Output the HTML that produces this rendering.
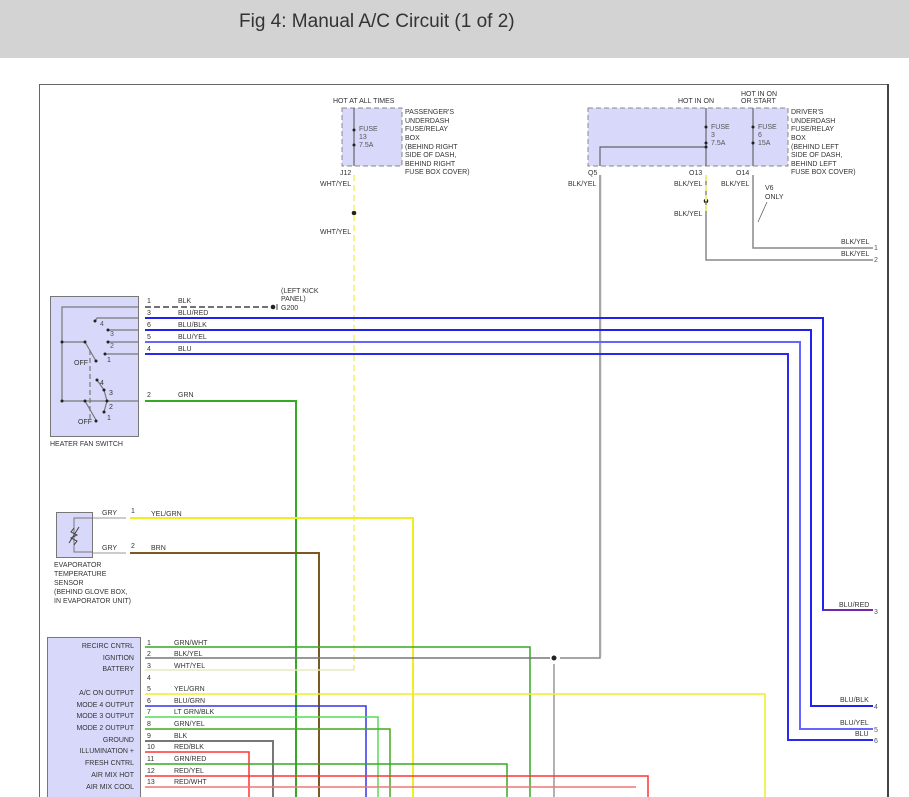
<!DOCTYPE html>
<html><head><meta charset="utf-8"><style>
html,body{margin:0;padding:0;background:#fff;width:909px;height:797px;overflow:hidden}
.hdr{position:absolute;left:0;top:0;width:909px;height:58px;background:#d3d3d3}
.hdr span{position:absolute;left:239px;top:11px;font:19px "Liberation Sans",sans-serif;color:#333}
svg{position:absolute;left:0;top:0}
text{font-family:"Liberation Sans",sans-serif;font-size:7px;fill:#333}
.n{fill:#555}
</style></head><body>
<div class="hdr"><span>Fig 4: Manual A/C Circuit (1 of 2)</span></div>
<svg width="909" height="797" viewBox="0 0 909 797">
<rect x="39.5" y="84.5" width="849" height="720" fill="none" stroke="#666" stroke-width="1"/>
<line x1="888" y1="84" x2="888" y2="797" stroke="#444" stroke-width="2"/>
<!-- fuse boxes -->
<rect x="342" y="108" width="60" height="58" fill="#d8d8fa" stroke="#888" stroke-dasharray="5,3"/>
<rect x="588" y="108" width="200" height="58" fill="#d8d8fa" stroke="#888" stroke-dasharray="5,3"/>
<g stroke="#666" fill="none" stroke-width="1.2">
<line x1="354" y1="108" x2="354" y2="166"/><line x1="706" y1="108" x2="706" y2="166"/><line x1="753" y1="108" x2="753" y2="166"/>
<polyline points="706,147 600,147 600,166"/>
</g>
<g fill="#222"><circle cx="354" cy="130" r="1.5"/><circle cx="354" cy="145" r="1.5"/><circle cx="706" cy="127" r="1.5"/><circle cx="706" cy="143" r="1.5"/><circle cx="706" cy="147" r="1.5"/><circle cx="753" cy="127" r="1.5"/><circle cx="753" cy="143" r="1.5"/>
<circle cx="354" cy="213" r="2.3"/><circle cx="706" cy="201" r="2.3"/><circle cx="554" cy="658" r="2.5"/><circle cx="273" cy="307" r="2.3"/></g>
<text x="333" y="103">HOT AT ALL TIMES</text>
<text x="359" y="131" class="n">FUSE</text><text x="359" y="139" class="n">13</text><text x="359" y="147" class="n">7.5A</text>
<text x="405" y="114">PASSENGER'S</text><text x="405" y="123">UNDERDASH</text><text x="405" y="131">FUSE/RELAY</text><text x="405" y="140">BOX</text><text x="405" y="149">(BEHIND RIGHT</text><text x="405" y="157">SIDE OF DASH,</text><text x="405" y="166">BEHIND RIGHT</text><text x="405" y="174">FUSE BOX COVER)</text>
<text x="340" y="175">J12</text><text x="320" y="186">WHT/YEL</text><text x="320" y="234">WHT/YEL</text>
<text x="678" y="103">HOT IN ON</text><text x="741" y="96">HOT IN ON</text><text x="741" y="103">OR START</text>
<text x="711" y="129" class="n">FUSE</text><text x="711" y="137" class="n">3</text><text x="711" y="145" class="n">7.5A</text>
<text x="758" y="129" class="n">FUSE</text><text x="758" y="137" class="n">6</text><text x="758" y="145" class="n">15A</text>
<text x="791" y="114">DRIVER'S</text><text x="791" y="123">UNDERDASH</text><text x="791" y="131">FUSE/RELAY</text><text x="791" y="140">BOX</text><text x="791" y="149">(BEHIND LEFT</text><text x="791" y="157">SIDE OF DASH,</text><text x="791" y="166">BEHIND LEFT</text><text x="791" y="174">FUSE BOX COVER)</text>
<text x="588" y="175">Q5</text><text x="568" y="186">BLK/YEL</text><text x="689" y="175">O13</text><text x="736" y="175">O14</text>
<text x="674" y="186">BLK/YEL</text><text x="721" y="186">BLK/YEL</text><text x="674" y="216">BLK/YEL</text>
<text x="765" y="190">V6</text><text x="765" y="199">ONLY</text>
<line x1="767" y1="202" x2="758" y2="222" stroke="#555" stroke-width="0.7"/>
<text x="841" y="244">BLK/YEL</text><text x="874" y="250" class="n">1</text>
<text x="841" y="256">BLK/YEL</text><text x="874" y="262" class="n">2</text>
<!-- fuse wires -->
<line x1="354" y1="175" x2="354" y2="668" stroke="#f4f48a" stroke-width="2" stroke-dasharray="6,4"/>
<polyline points="600,175 600,658 560,658" fill="none" stroke="#888" stroke-width="1.5"/>
<line x1="601.5" y1="175" x2="601.5" y2="657" stroke="#eeee88" stroke-width="0.8"/>
<polyline points="706,175 706,260 873,260" fill="none" stroke="#888" stroke-width="1.5"/>
<line x1="706" y1="175" x2="706" y2="215" stroke="#eeee80" stroke-width="2" stroke-dasharray="6,4"/>
<polyline points="753,175 753,248 873,248" fill="none" stroke="#888" stroke-width="1.5"/>
<!-- heater fan switch -->
<rect x="50.5" y="296.5" width="88" height="140" fill="#d8d8fa" stroke="#777"/>
<g stroke="#777" fill="none" stroke-width="1.2">
<polyline points="139,307 62,307 62,401 139,401"/>
<polyline points="95,321 97,318 139,318"/><line x1="108" y1="330" x2="139" y2="330"/>
<line x1="107" y1="342" x2="139" y2="342"/><line x1="105" y1="354" x2="139" y2="354"/>
<line x1="62" y1="342" x2="85" y2="342"/><line x1="85" y1="342" x2="96" y2="361"/>
<line x1="85" y1="401" x2="96" y2="420"/><polyline points="104,390 107,401 104,412"/>
<line x1="97" y1="380" x2="104" y2="390"/>
</g>
<line x1="90" y1="350" x2="90" y2="420" stroke="#777" stroke-width="1.2" stroke-dasharray="5,3"/>
<g fill="#222"><circle cx="95" cy="321" r="1.5"/><circle cx="108" cy="330" r="1.5"/><circle cx="108" cy="342" r="1.5"/><circle cx="105" cy="354" r="1.5"/><circle cx="62" cy="342" r="1.5"/><circle cx="85" cy="342" r="1.5"/><circle cx="96" cy="361" r="1.5"/>
<circle cx="97" cy="380" r="1.5"/><circle cx="104" cy="390" r="1.5"/><circle cx="107" cy="401" r="1.5"/><circle cx="104" cy="412" r="1.5"/><circle cx="62" cy="401" r="1.5"/><circle cx="85" cy="401" r="1.5"/><circle cx="96" cy="421" r="1.5"/></g>
<text x="100" y="326" class="n">4</text><text x="110" y="336" class="n">3</text><text x="110" y="348" class="n">2</text><text x="107" y="362" fill="#a04">1</text>
<text x="74" y="365">OFF</text><text x="100" y="385">4</text><text x="109" y="395">3</text><text x="109" y="409">2</text><text x="107" y="420" fill="#a04">1</text><text x="78" y="424">OFF</text>
<text x="50" y="446">HEATER FAN SWITCH</text>
<g font-size="7"><text x="147" y="303">1</text><text x="147" y="315">3</text><text x="147" y="327">6</text><text x="147" y="339">5</text><text x="147" y="351">4</text><text x="147" y="397">2</text>
<text x="178" y="303">BLK</text><text x="178" y="315">BLU/RED</text><text x="178" y="327">BLU/BLK</text><text x="178" y="339">BLU/YEL</text><text x="178" y="351">BLU</text><text x="178" y="397">GRN</text>
<text x="281" y="293">(LEFT KICK</text><text x="281" y="301">PANEL)</text><text x="281" y="310">G200</text></g>
<line x1="145" y1="307" x2="271" y2="307" stroke="#444" stroke-width="1.4" stroke-dasharray="6,3"/>
<line x1="277" y1="304" x2="277" y2="310" stroke="#444"/>
<polyline points="145,318 823,318 823,610 873,610" fill="none" stroke="#2222ee" stroke-width="2"/>
<line x1="823" y1="610" x2="873" y2="610" stroke="#c03060" stroke-width="1"/>
<polyline points="145,330 811,330 811,706 873,706" fill="none" stroke="#2222ee" stroke-width="2"/>
<polyline points="145,342 800,342 800,729 873,729" fill="none" stroke="#6666ff" stroke-width="2"/>
<polyline points="145,354 788,354 788,740 873,740" fill="none" stroke="#2a2aee" stroke-width="2"/>
<text x="839" y="607">BLU/RED</text><text x="874" y="614" class="n">3</text>
<text x="840" y="702">BLU/BLK</text><text x="874" y="709" class="n">4</text>
<text x="840" y="725">BLU/YEL</text><text x="874" y="732" class="n">5</text>
<text x="855" y="736">BLU</text><text x="874" y="743" class="n">6</text>
<polyline points="145,401 296,401 296,797" fill="none" stroke="#33aa22" stroke-width="2"/>
<!-- evap sensor -->
<rect x="56.5" y="512.5" width="36" height="45" fill="#d8d8fa" stroke="#777"/>
<polyline points="93,518 74,518 74,552 93,552" fill="none" stroke="#777"/>
<polyline points="74,528 71,532 77,535 71,538 77,541 74,545" fill="none" stroke="#444"/>
<line x1="69" y1="543" x2="79" y2="527" stroke="#444"/>
<line x1="93" y1="518" x2="126" y2="518" stroke="#bbb" stroke-width="1.5"/>
<line x1="93" y1="553" x2="126" y2="553" stroke="#bbb" stroke-width="1.5"/>
<text x="102" y="515">GRY</text><text x="102" y="550">GRY</text><text x="131" y="513">1</text><text x="131" y="548">2</text>
<text x="151" y="516">YEL/GRN</text><text x="151" y="550">BRN</text>
<text x="54" y="567">EVAPORATOR</text><text x="54" y="576">TEMPERATURE</text><text x="54" y="585">SENSOR</text><text x="54" y="594">(BEHIND GLOVE BOX,</text><text x="54" y="603">IN EVAPORATOR UNIT)</text>
<polyline points="130,518 413,518 413,797" fill="none" stroke="#eeee22" stroke-width="2"/>
<polyline points="130,553 319,553 319,797" fill="none" stroke="#7a5a20" stroke-width="2"/>
<!-- module -->
<rect x="47.5" y="637.5" width="93" height="170" fill="#d8d8fa" stroke="#777"/>
<g text-anchor="end"><text x="134" y="648">RECIRC CNTRL</text><text x="134" y="660">IGNITION</text><text x="134" y="671">BATTERY</text><text x="134" y="695">A/C ON OUTPUT</text><text x="134" y="707">MODE 4 OUTPUT</text><text x="134" y="718">MODE 3 OUTPUT</text><text x="134" y="730">MODE 2 OUTPUT</text><text x="134" y="742">GROUND</text><text x="134" y="753" fill="#2233cc">ILLUMINATION +</text><text x="134" y="765">FRESH CNTRL</text><text x="134" y="777">AIR MIX HOT</text><text x="134" y="789">AIR MIX COOL</text></g>
<g><text x="147" y="645">1</text><text x="147" y="656">2</text><text x="147" y="668">3</text><text x="147" y="680">4</text><text x="147" y="691">5</text><text x="147" y="703">6</text><text x="147" y="714">7</text><text x="147" y="726">8</text><text x="147" y="738">9</text><text x="147" y="749">10</text><text x="147" y="761">11</text><text x="147" y="773">12</text><text x="147" y="784">13</text>
<text x="174" y="645">GRN/WHT</text><text x="174" y="656">BLK/YEL</text><text x="174" y="668">WHT/YEL</text><text x="174" y="691">YEL/GRN</text><text x="174" y="703">BLU/GRN</text><text x="174" y="714">LT GRN/BLK</text><text x="174" y="726">GRN/YEL</text><text x="174" y="738">BLK</text><text x="174" y="749">RED/BLK</text><text x="174" y="761">GRN/RED</text><text x="174" y="773">RED/YEL</text><text x="174" y="784">RED/WHT</text></g>
<g fill="none" stroke-width="1.5">
<polyline points="145,647 530,647 530,797" stroke="#33aa22"/>
<line x1="145" y1="658" x2="550" y2="658" stroke="#777"/>
<line x1="554" y1="664" x2="554" y2="797" stroke="#999"/>
<polyline points="145,670 354,670 354,668" stroke="#e8e8c0"/>
<polyline points="145,694 765,694 765,797" stroke="#eeee22"/>
<polyline points="145,706 366,706 366,797" stroke="#3333ee"/>
<polyline points="145,717 378,717 378,797" stroke="#55dd55"/>
<polyline points="145,729 390,729 390,797" stroke="#44aa22"/>
<polyline points="145,741 273,741 273,797" stroke="#777" stroke-width="2"/>
<polyline points="145,752 249,752 249,797" stroke="#ff3333"/>
<polyline points="145,764 507,764 507,797" stroke="#33aa22"/>
<polyline points="145,776 648,776 648,797" stroke="#ff3333"/>
<line x1="145" y1="787" x2="636" y2="787" stroke="#ee7777"/>
</g>
</svg>
</body></html>
